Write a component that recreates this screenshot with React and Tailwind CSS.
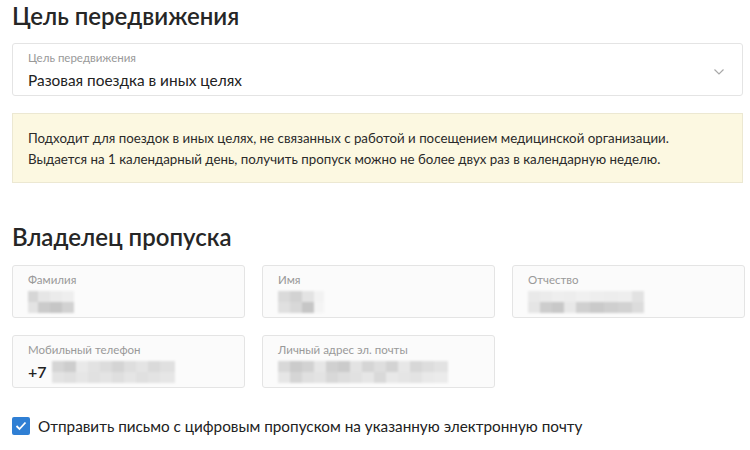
import React from 'react';

const FONT = "font-['Lato','Open_Sans',sans-serif]";

// Pixelated blur standing in for the redacted personal data.
function Mosaic({ cells, className = '' }) {
  return (
    <div className={`flex blur-[1.2px] ${className}`}>
      {cells.map((col, i) => (
        <div key={i} className="flex flex-col" style={{ width: col.w }}>
          <div className="h-[11px]" style={{ background: col.t }} />
          <div className="h-[11px]" style={{ background: col.b }} />
        </div>
      ))}
    </div>
  );
}

function Field({ label, className = '', children }) {
  return (
    <div className={`h-[53px] rounded-[3px] border border-[#e4e4e4] bg-[#fbfbfb] pl-[15px] pt-[6px] ${className}`}>
      <div className="text-[11.5px] leading-[16px] text-[#999]">{label}</div>
      <div className="mt-[3px] flex items-center">{children}</div>
    </div>
  );
}

export default function App() {
  return (
    <div className={`w-[750px] h-[450px] overflow-hidden bg-white px-[12px] text-[#2b2b2b] ${FONT}`}>
      <h1 className="pt-[1px] text-[24px] leading-[30px] font-semibold text-[#262626]">Цель передвижения</h1>

      {/* Purpose select */}
      <div className="mt-[12px] h-[53px] w-[731px] rounded-[3px] border border-[#e4e4e4] bg-white pl-[15px] pt-[6px] flex items-start justify-between">
        <div>
          <div className="text-[11.5px] leading-[16px] text-[#999]">Цель передвижения</div>
          <div className="mt-[4px] text-[15.4px] leading-[20px] text-[#222]">Разовая поездка в иных целях</div>
        </div>
        <svg className="mr-[17px] mt-[18px]" width="12" height="8" viewBox="0 0 12 8" fill="none">
          <path d="M1.5 1.5 L6 6 L10.5 1.5" stroke="#a9a9a9" strokeWidth="1.2" />
        </svg>
      </div>

      {/* Hint */}
      <div className="mt-[17px] h-[70px] w-[731px] border border-[#ece8d2] bg-[#fcf8e1] pl-[15px] pt-[14px] text-[13.3px] leading-[21px] text-[#2a2a2a]">
        <p>Подходит для поездок в иных целях, не связанных с работой и посещением медицинской организации.</p>
        <p>Выдается на 1 календарный день, получить пропуск можно не более двух раз в календарную неделю.</p>
      </div>

      <h2 className="mt-[39px] text-[24px] leading-[30px] font-semibold text-[#262626]">Владелец пропуска</h2>

      <div className="mt-[13px] grid grid-cols-[233px_233px_233px] gap-x-[17px] gap-y-[17px]">
        <Field label="Фамилия">
          <Mosaic cells={[
            { w: 10, t: '#d6d6d6', b: '#e3e3e3' },
            { w: 12, t: '#e6e6e6', b: '#cbcbcb' },
            { w: 12, t: '#ebebeb', b: '#c6c6c6' },
            { w: 12, t: '#eeeeee', b: '#d2d2d2' },
          ]} />
        </Field>
        <Field label="Имя">
          <Mosaic cells={[
            { w: 12, t: '#dadada', b: '#e0e0e0' },
            { w: 12, t: '#d2d2d2', b: '#d8d8d8' },
            { w: 12, t: '#e3e3e3', b: '#c6c6c6' },
            { w: 10, t: '#f2f2f2', b: '#f4f4f4' },
          ]} />
        </Field>
        <Field label="Отчество">
          <Mosaic cells={[
            { w: 12, t: '#e9e9e9', b: '#e5e5e5' },
            { w: 12, t: '#ebebeb', b: '#cdcdcd' },
            { w: 12, t: '#eeeeee', b: '#c8c8c8' },
            { w: 12, t: '#ededed', b: '#e8e8e8' },
            { w: 14, t: '#f0f0f0', b: '#d0d0d0' },
            { w: 14, t: '#eeeeee', b: '#cacaca' },
            { w: 14, t: '#ededed', b: '#cfcfcf' },
            { w: 14, t: '#eeeeee', b: '#d2d2d2' },
            { w: 12, t: '#e2e2e2', b: '#dcdcdc' },
          ]} />
        </Field>
        <Field label="Мобильный телефон">
          <span className="text-[16px] leading-[22px] font-semibold text-[#222] mr-[5px]">+7</span>
          <Mosaic cells={[
            { w: 12, t: '#d5d5d5', b: '#e3e3e3' },
            { w: 12, t: '#cdcdcd', b: '#e0e0e0' },
            { w: 12, t: '#e9e9e9', b: '#e6e6e6' },
            { w: 12, t: '#e2e2e2', b: '#e1e1e1' },
            { w: 12, t: '#dcdcdc', b: '#e4e4e4' },
            { w: 12, t: '#d4d4d4', b: '#dfdfdf' },
            { w: 12, t: '#dedede', b: '#e5e5e5' },
            { w: 12, t: '#e4e4e4', b: '#e0e0e0' },
            { w: 12, t: '#dadada', b: '#e3e3e3' },
            { w: 15, t: '#e0e0e0', b: '#e6e6e6' },
          ]} />
        </Field>
        <Field label="Личный адрес эл. почты">
          <Mosaic cells={[
            { w: 12, t: '#d8d8d8', b: '#e6e6e6' },
            { w: 12, t: '#cbcbcb', b: '#d5d5d5' },
            { w: 12, t: '#d2d2d2', b: '#e0e0e0' },
            { w: 12, t: '#e6e6e6', b: '#e3e3e3' },
            { w: 12, t: '#d0d0d0', b: '#d8d8d8' },
            { w: 12, t: '#cbcbcb', b: '#dedede' },
            { w: 12, t: '#e3e3e3', b: '#e1e1e1' },
            { w: 12, t: '#d5d5d5', b: '#e6e6e6' },
            { w: 12, t: '#dedede', b: '#d9d9d9' },
            { w: 12, t: '#d3d3d3', b: '#e8e8e8' },
            { w: 12, t: '#e7e7e7', b: '#e5e5e5' },
            { w: 12, t: '#d7d7d7', b: '#e3e3e3' },
            { w: 12, t: '#dddddd', b: '#e9e9e9' },
            { w: 14, t: '#e2e2e2', b: '#ebebeb' },
          ]} />
        </Field>
      </div>

      {/* Email copy checkbox */}
      <label className="mt-[27px] flex items-center gap-[8px]">
        <span className="flex h-[18px] w-[18px] items-center justify-center rounded-[2px] bg-[#2f7fd4]">
          <svg width="12" height="10" viewBox="0 0 12 10" fill="none">
            <path d="M1.5 5 L4.5 8 L10.5 1.5" stroke="white" strokeWidth="1.8" />
          </svg>
        </span>
        <span className="text-[15.3px] leading-[22px] text-[#222]">Отправить письмо с цифровым пропуском на указанную электронную почту</span>
      </label>
    </div>
  );
}
